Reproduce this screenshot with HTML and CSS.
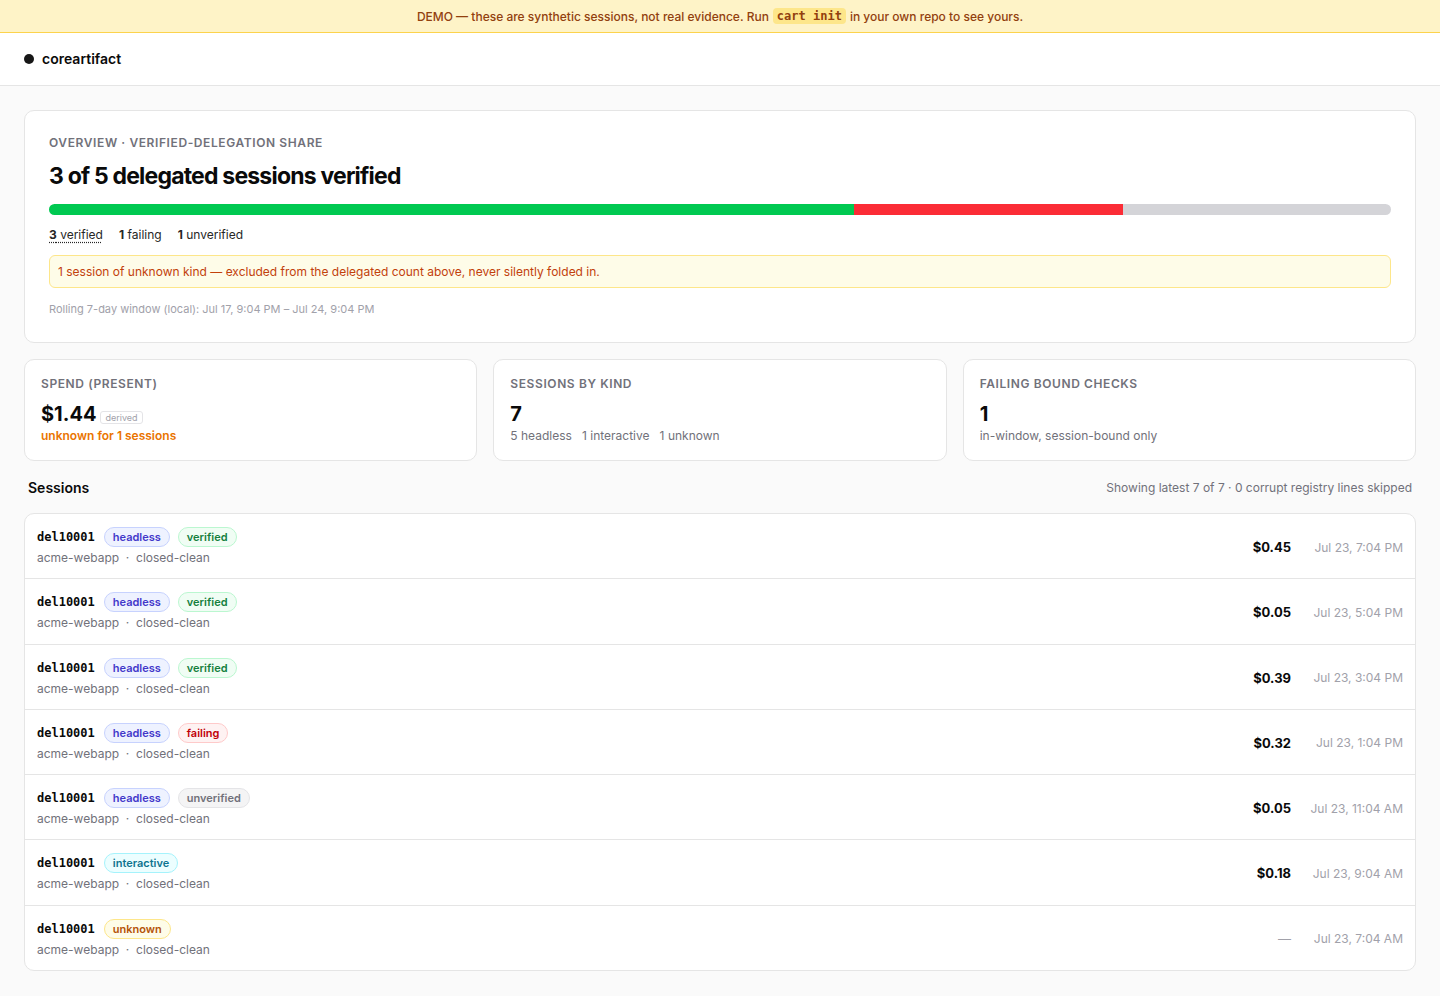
FILE: index.html
```html
<!DOCTYPE html>
<html lang="en">
  <head>
    <meta charset="UTF-8" />
    <meta name="viewport" content="width=device-width, initial-scale=1.0" />
    <title>coreartifact</title>
    <link rel="stylesheet" href="styles.css">
  </head>
  <body>
    <div class="demo">
      DEMO — these are synthetic sessions, not real evidence. Run <code>cart init</code> in your own repo to see yours.
    </div>

    <header class="top">
      <span class="dot"></span>
      <span class="brand">coreartifact</span>
    </header>

    <main class="page">
      <section class="card overview">
        <div class="label">Overview · verified-delegation share</div>
        <h1>3 of 5 delegated sessions verified</h1>
        <div class="bar">
          <span class="seg ok" style="width: 60%"></span>
          <span class="seg bad" style="width: 20%"></span>
          <span class="seg none" style="width: 20%"></span>
        </div>
        <div class="legend">
          <span class="dotted"><b>3</b> verified</span>
          <span><b>1</b> failing</span>
          <span><b>1</b> unverified</span>
        </div>
        <div class="notice">1 session of unknown kind — excluded from the delegated count above, never silently folded in.</div>
        <div class="window">Rolling 7-day window (local): Jul 17, 9:04 PM – Jul 24, 9:04 PM</div>
      </section>

      <section class="stats">
        <div class="card stat">
          <div class="label">Spend (present)</div>
          <div class="value">$1.44 <span class="derived">derived</span></div>
          <div class="sub warn">unknown for 1 sessions</div>
        </div>
        <div class="card stat">
          <div class="label">Sessions by kind</div>
          <div class="value">7</div>
          <div class="sub">5 headless &nbsp; 1 interactive &nbsp; 1 unknown</div>
        </div>
        <div class="card stat">
          <div class="label">Failing bound checks</div>
          <div class="value">1</div>
          <div class="sub">in-window, session-bound only</div>
        </div>
      </section>

      <div class="list-head">
        <h2>Sessions</h2>
        <span>Showing latest 7 of 7 · 0 corrupt registry lines skipped</span>
      </div>

      <section class="card sessions">
        <div class="row">
          <div class="info">
            <div class="line"><span class="sid">del10001</span><span class="pill headless">headless</span><span class="pill verified">verified</span></div>
            <div class="meta">acme-webapp &nbsp;·&nbsp; closed-clean</div>
          </div>
          <span class="cost">$0.45</span>
          <span class="when">Jul 23, 7:04 PM</span>
        </div>
        <div class="row">
          <div class="info">
            <div class="line"><span class="sid">del10001</span><span class="pill headless">headless</span><span class="pill verified">verified</span></div>
            <div class="meta">acme-webapp &nbsp;·&nbsp; closed-clean</div>
          </div>
          <span class="cost">$0.05</span>
          <span class="when">Jul 23, 5:04 PM</span>
        </div>
        <div class="row">
          <div class="info">
            <div class="line"><span class="sid">del10001</span><span class="pill headless">headless</span><span class="pill verified">verified</span></div>
            <div class="meta">acme-webapp &nbsp;·&nbsp; closed-clean</div>
          </div>
          <span class="cost">$0.39</span>
          <span class="when">Jul 23, 3:04 PM</span>
        </div>
        <div class="row">
          <div class="info">
            <div class="line"><span class="sid">del10001</span><span class="pill headless">headless</span><span class="pill failing">failing</span></div>
            <div class="meta">acme-webapp &nbsp;·&nbsp; closed-clean</div>
          </div>
          <span class="cost">$0.32</span>
          <span class="when">Jul 23, 1:04 PM</span>
        </div>
        <div class="row">
          <div class="info">
            <div class="line"><span class="sid">del10001</span><span class="pill headless">headless</span><span class="pill unverified">unverified</span></div>
            <div class="meta">acme-webapp &nbsp;·&nbsp; closed-clean</div>
          </div>
          <span class="cost">$0.05</span>
          <span class="when">Jul 23, 11:04 AM</span>
        </div>
        <div class="row">
          <div class="info">
            <div class="line"><span class="sid">del10001</span><span class="pill interactive">interactive</span></div>
            <div class="meta">acme-webapp &nbsp;·&nbsp; closed-clean</div>
          </div>
          <span class="cost">$0.18</span>
          <span class="when">Jul 23, 9:04 AM</span>
        </div>
        <div class="row">
          <div class="info">
            <div class="line"><span class="sid">del10001</span><span class="pill unknown">unknown</span></div>
            <div class="meta">acme-webapp &nbsp;·&nbsp; closed-clean</div>
          </div>
          <span class="cost dash">—</span>
          <span class="when">Jul 23, 7:04 AM</span>
        </div>
      </section>
    </main>
  </body>
</html>
```

FILE: styles.css
```css
* {
  box-sizing: border-box;
}
body {
  margin: 0;
  background-color: #fafafa;
  font-family: Inter, "Noto Sans", sans-serif;
  color: #0a0a0a;
}

/* demo banner */
.demo {
  height: 33px;
  display: flex;
  align-items: center;
  justify-content: center;
  gap: 4px;
  background-color: #fef3c7;
  border-bottom: 1px solid #fcd34d;
  color: #92400e;
  font-size: 12px;
  font-weight: 500;
}
.demo code {
  font-family: "DejaVu Sans Mono", monospace;
  font-weight: 700;
  font-size: 12px;
  background-color: #fde68a;
  border-radius: 4px;
  padding: 1px 4px;
}

/* header */
.top {
  height: 53px;
  display: flex;
  align-items: center;
  gap: 8px;
  padding: 0 24px;
  background-color: #fff;
  border-bottom: 1px solid #e5e5e5;
}
.dot {
  width: 10px;
  height: 10px;
  border-radius: 50%;
  background-color: #171717;
}
.brand {
  font-size: 14px;
  font-weight: 600;
  margin-top: -2px;
}

.page {
  padding: 24px;
}
.card {
  background-color: #fff;
  border: 1px solid #e5e5e5;
  border-radius: 10px;
}
.label {
  font-size: 12px;
  font-weight: 600;
  text-transform: uppercase;
  letter-spacing: 0.05em;
  color: #71717a;
}

/* overview */
.overview {
  padding: 24px 24px 26px;
}
.overview h1 {
  margin: 10px 0 12px;
  font-size: 23px;
  font-weight: 700;
  letter-spacing: -0.035em;
  line-height: 32px;
}
.bar {
  display: flex;
  height: 11px;
  border-radius: 999px;
  overflow: hidden;
}
.seg.ok {
  background-color: #00c951;
}
.seg.bad {
  background-color: #fb2c36;
}
.seg.none {
  background-color: #d4d4d8;
}
.legend {
  display: flex;
  gap: 16px;
  margin-top: 12px;
  font-size: 12px;
  color: #262626;
}
.legend b {
  font-weight: 700;
}
.dotted {
  text-decoration: underline dotted;
  text-underline-offset: 3px;
}
.notice {
  margin-top: 13px;
  padding: 8px 8px;
  background-color: #fefce8;
  border: 1px solid #fde68a;
  border-radius: 6px;
  font-size: 12px;
  color: #c2410c;
}
.window {
  margin-top: 14px;
  font-size: 11px;
  color: #a1a1aa;
}

/* stat cards */
.stats {
  display: grid;
  grid-template-columns: repeat(3, 1fr);
  gap: 16px;
  margin-top: 16px;
}
.stat {
  padding: 16px 16px 17px;
}
.stat .value {
  margin-top: 11px;
  font-size: 20px;
  font-weight: 700;
  line-height: 24px;
  display: flex;
  align-items: center;
  gap: 4px;
}
.derived {
  font-size: 9px;
  font-weight: 400;
  color: #a1a1aa;
  border: 1px solid #e4e4e7;
  border-radius: 3px;
  padding: 0 4px;
  line-height: 11px;
  margin-top: 6px;
}
.sub {
  margin-top: 2px;
  font-size: 12px;
  color: #71717a;
}
.sub.warn {
  color: #ea7400;
  font-weight: 600;
}

/* sessions */
.list-head {
  display: flex;
  justify-content: space-between;
  align-items: center;
  padding: 18px 4px 17px;
}
.list-head h2 {
  margin: 0;
  font-size: 14px;
  font-weight: 600;
}
.list-head span {
  font-size: 12px;
  color: #71717a;
}
.sessions {
  overflow: hidden;
}
.row {
  display: flex;
  align-items: center;
  gap: 16px;
  padding: 12px 12px 10.3px;
  border-bottom: 1px solid #e5e5e5;
}
.row:last-child {
  border-bottom: none;
}
.info {
  flex: 1;
}
.line {
  display: flex;
  align-items: center;
  gap: 8px;
  height: 22px;
}
.sid {
  font-family: "DejaVu Sans Mono", monospace;
  font-weight: 700;
  font-size: 12px;
  margin-right: 1px;
}
.pill {
  height: 20px;
  display: inline-flex;
  align-items: center;
  padding: 0 8px;
  border-radius: 999px;
  border: 1px solid;
  font-size: 11px;
  font-weight: 600;
}
.headless {
  background-color: #eef2ff;
  border-color: #c7d2fe;
  color: #4338ca;
}
.verified {
  background-color: #f0fdf4;
  border-color: #bbf7d0;
  color: #15803d;
}
.failing {
  background-color: #fef2f2;
  border-color: #fecaca;
  color: #c10007;
}
.unverified {
  background-color: #f4f4f5;
  border-color: #e4e4e7;
  color: #71717a;
}
.interactive {
  background-color: #ecfeff;
  border-color: #a5f3fc;
  color: #0e7490;
}
.unknown {
  background-color: #fefce8;
  border-color: #fde68a;
  color: #b45309;
}
.meta {
  font-size: 12px;
  line-height: 20px;
  color: #71717a;
}
.cost {
  font-size: 13px;
  font-weight: 700;
}
.cost.dash {
  font-weight: 400;
  color: #a1a1aa;
}
.when {
  width: 96px;
  text-align: right;
  font-size: 12px;
  color: #a1a1aa;
}
```
